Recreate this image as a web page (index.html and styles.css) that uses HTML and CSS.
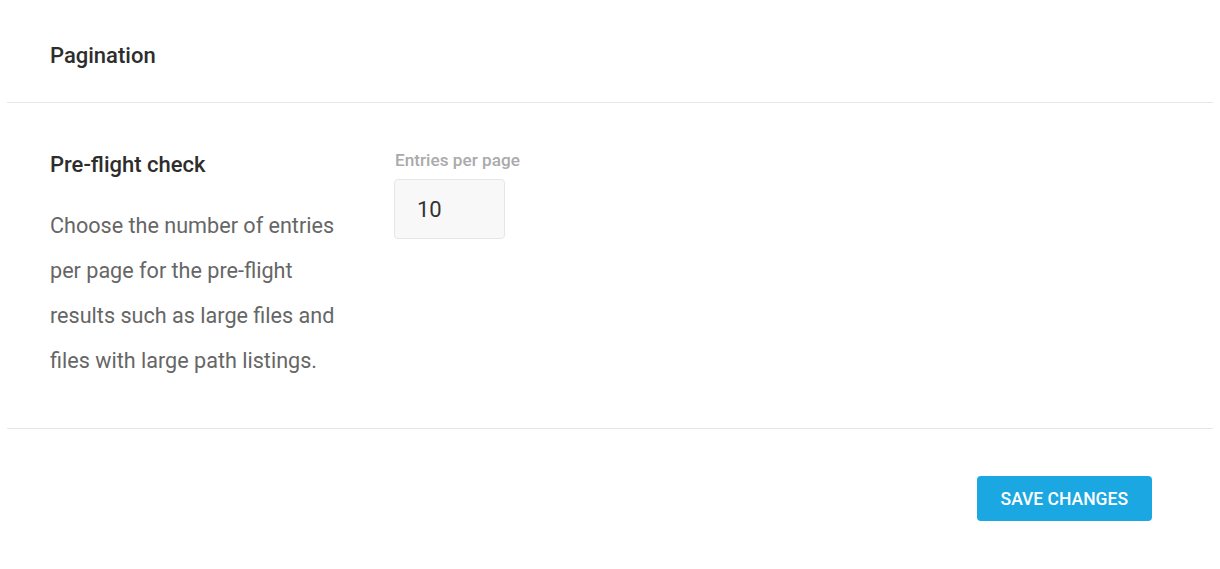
FILE: index.html
```html
<!DOCTYPE html>
<html lang="en">
<head>
    <meta charset="UTF-8">
    <meta name="viewport" content="width=device-width, initial-scale=1.0">
    <title>Pagination</title>
    <link rel="stylesheet" href="styles.css">
</head>
<body>
    <div class="box">
        <div class="box-header">
            <h2 class="box-title">Pagination</h2>
        </div>

        <div class="box-body">
            <div class="setting-info">
                <h3 class="setting-title">Pre-flight check</h3>
                <p class="setting-desc">Choose the number of entries per page for the pre-flight results such as large files and files with large path listings.</p>
            </div>
            <div class="setting-field">
                <label class="field-label" for="entries">Entries per page</label>
                <input type="number" id="entries" class="input-number" value="10">
            </div>
        </div>

        <div class="box-footer">
            <button class="button">Save Changes</button>
        </div>
    </div>
</body>
</html>
```

FILE: styles.css
```css
body {
    font-family: Roboto, "Noto Sans", sans-serif;
    background: #fff;
    color: #333;
    margin: 0;
    padding: 0 7px;
}
.box {
    background: #fff;
}
.box-header {
    height: 102px;
    padding: 0 43px;
    display: flex;
    align-items: center;
    border-bottom: 1px solid #e6e6e6;
}
.box-title {
    margin: 0;
    font-size: 22px;
    font-weight: 500;
    color: #2d2d2d;
    position: relative;
    top: 4px;
}
.box-body {
    display: flex;
    padding: 47px 43px 45px;
    border-bottom: 1px solid #e6e6e6;
}
.setting-info {
    width: 300px;
    margin-right: 44px;
}
.setting-title {
    margin: 0;
    font-size: 22px;
    font-weight: 500;
    line-height: 30px;
    color: #2d2d2d;
}
.setting-desc {
    margin: 23px 0 0;
    font-size: 21.6px;
    line-height: 45px;
    color: #666;
}
.setting-field {
    display: flex;
    flex-direction: column;
    align-items: flex-start;
}
.field-label {
    font-size: 17.2px;
    font-weight: 500;
    color: #aaa;
    line-height: 20px;
    margin-top: 0;
    margin-bottom: 9px;
    padding-left: 1px;
}
.input-number {
    width: 111px;
    height: 60px;
    box-sizing: border-box;
    padding: 0 22px;
    font-family: inherit;
    font-size: 22px;
    color: #333;
    background: #f8f8f8;
    border: 1px solid #e6e6e6;
    border-radius: 4px;
    outline: none;
    -moz-appearance: textfield;
}
.input-number::-webkit-outer-spin-button,
.input-number::-webkit-inner-spin-button {
    -webkit-appearance: none;
    margin: 0;
}
.box-footer {
    display: flex;
    justify-content: flex-end;
    padding: 47px 61px 48px;
}
.button {
    height: 45px;
    padding: 0 24px;
    font-family: inherit;
    font-size: 17.5px;
    font-weight: 500;
    text-transform: uppercase;
    color: #fff;
    background-color: #1ba8e2;
    border: none;
    border-radius: 4px;
    cursor: pointer;
}
.button:hover {
    background-color: #1396cc;
}
```
